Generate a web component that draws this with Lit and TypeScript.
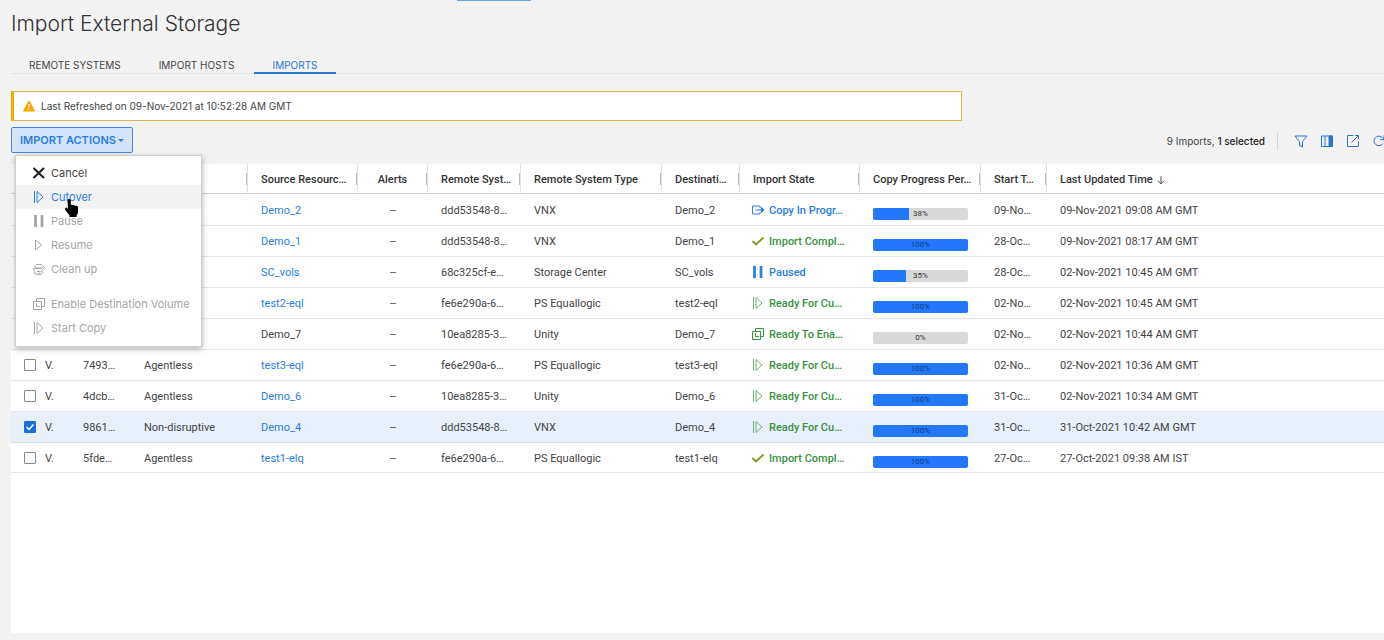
import { LitElement, html, svg, css, nothing } from "lit";
import { customElement, state } from "lit/decorators.js";
import { classMap } from "lit/directives/class-map.js";

type StateKind = "copy" | "done" | "paused" | "ready" | "enable";

interface ImportRow {
  kind: string;
  id: string;
  type: string;
  source: string;
  linked: boolean;
  system: string;
  systemType: string;
  dest: string;
  state: StateKind;
  label: string;
  progress: number;
  start: string;
  updated: string;
}

const row = (
  id: string, type: string, source: string, system: string, systemType: string,
  state: StateKind, label: string, progress: number, start: string, updated: string,
  linked = true,
): ImportRow => ({
  kind: id ? "V." : "", id, type, source, linked, system, systemType,
  dest: source, state, label, progress, start, updated,
});

const ROWS: ImportRow[] = [
  row("", "", "Demo_2", "ddd53548-8…", "VNX", "copy", "Copy In Progr…", 38, "09-No…", "09-Nov-2021 09:08 AM GMT"),
  row("", "", "Demo_1", "ddd53548-8…", "VNX", "done", "Import Compl…", 100, "28-Oc…", "09-Nov-2021 08:17 AM GMT"),
  row("", "", "SC_vols", "68c325cf-e…", "Storage Center", "paused", "Paused", 35, "28-Oc…", "02-Nov-2021 10:45 AM GMT"),
  row("", "", "test2-eql", "fe6e290a-6…", "PS Equallogic", "ready", "Ready For Cu…", 100, "02-No…", "02-Nov-2021 10:45 AM GMT"),
  row("", "", "Demo_7", "10ea8285-3…", "Unity", "enable", "Ready To Ena…", 0, "02-No…", "02-Nov-2021 10:44 AM GMT", false),
  row("7493…", "Agentless", "test3-eql", "fe6e290a-6…", "PS Equallogic", "ready", "Ready For Cu…", 100, "02-No…", "02-Nov-2021 10:36 AM GMT"),
  row("4dcb…", "Agentless", "Demo_6", "10ea8285-3…", "Unity", "ready", "Ready For Cu…", 100, "31-Oc…", "02-Nov-2021 10:34 AM GMT"),
  row("9861…", "Non-disruptive", "Demo_4", "ddd53548-8…", "VNX", "ready", "Ready For Cu…", 100, "31-Oc…", "31-Oct-2021 10:42 AM GMT"),
  row("5fde…", "Agentless", "test1-elq", "fe6e290a-6…", "PS Equallogic", "done", "Import Compl…", 100, "27-Oc…", "27-Oct-2021 09:38 AM IST"),
];

const HEADERS: [string, string][] = [
  ["c-check", ""], ["c-kind", ""], ["c-id", ""], ["c-type", ""],
  ["c-source", "Source Resourc…"], ["c-alerts", "Alerts"], ["c-system", "Remote Syst…"],
  ["c-systype", "Remote System Type"], ["c-dest", "Destinati…"], ["c-state", "Import State"],
  ["c-progress", "Copy Progress Per…"], ["c-start", "Start T…"], ["c-updated", "Last Updated Time"],
];

const SHAPES = {
  cancel: svg`<path d="M1.500 2l10.500 10M12 2L1.500 12" stroke-width="2.2"/>`,
  step: svg`<path d="M2.500 1v12M5 1.500v11l6-5.500z"/>`,
  pause: svg`<path d="M3.500 1v12M10 1v12" stroke-width="2.8"/>`,
  resume: svg`<path d="M3.500 2v10l6-5z"/>`,
  clean: svg`<path d="M1.500 6.500L3 12l5 .5M2.500 4.500l2-2h5l2 2-2 1.500h-5zM1.500 6.500h8M5 9.500h3M13 5L9.500 9M6.500 12l3-3 1.500 1.500-2 2z"/>`,
  enable: svg`<path d="M1.500 4.500h8v8h-8zM4.500 4.500v-3h8v8h-3M4.500 6v3.500H8"/>`,
  copy: svg`<path d="M9 5V3H1.500v8H9V9M4.500 7h6"/><path d="M10.500 4.500L13 7l-2.500 2.500z" fill="currentColor"/>`,
  done: svg`<path d="M1.500 7l3.500 3.500L12.500 3.500" stroke-width="1.800"/>`,
  filter: svg`<path d="M1 2h12L8.500 7.500V13l-3-1.500v-4z"/>`,
  columns: svg`<path d="M1.500 2h11v10.500h-11zM5 2v10.500"/><path d="M9 2h3.500v10.500H9z" fill="currentColor"/>`,
  open: svg`<path d="M7.500 1.500h-6v11h11V7.500M5.500 8.500l7-7M9 1.500h3.500V5"/>`,
  refresh: svg`<path d="M10.500 10A4.800 4.800 0 1 1 10.500 3.800L12 5.500M12 1.500v4.200H8"/>`,
  sort: svg`<path d="M7 2.500v9M3.500 8L7 11.500 10.500 8"/>`,
};

const icon = (name: keyof typeof SHAPES) => html`
  <svg class="icon" viewBox="0 0 14 14" aria-hidden="true">${SHAPES[name]}</svg>`;

const MENU: [keyof typeof SHAPES, string, string][] = [
  ["cancel", "Cancel", "strong"],
  ["step", "Cutover", "active"],
  ["pause", "Pause", "off"],
  ["resume", "Resume", "off"],
  ["clean", "Clean up", "off"],
  ["enable", "Enable Destination Volume", "off split"],
  ["step", "Start Copy", "off"],
];

@customElement("app-root")
export class AppRoot extends LitElement {
  @state() private selected = 7;

  static styles = css`
    :host {
      display: flex;
      flex-direction: column;
      min-height: 100vh;
      box-sizing: border-box;
      padding: 0 0 7px 11px;
      overflow: hidden;
      background: #f3f3f3;
      color: #444;
      font: 11px/16px Inter, sans-serif;
      position: relative;
    }
    * { box-sizing: border-box; }
    button { font: inherit; color: inherit; background: none; border: 0; padding: 0; }
    a { color: #2a7de1; text-decoration: none; }
    .icon {
      display: block;
      flex: none;
      width: 14px;
      height: 14px;
      fill: none;
      stroke: currentColor;
      stroke-width: 1;
    }
    .top-mark {
      position: absolute;
      top: 0;
      left: 457px;
      width: 74px;
      height: 1px;
      background: #6fa5ec;
    }
    h1 {
      margin: 8px 0 0;
      font-size: 21px;
      line-height: 32px;
      font-weight: 300;
      color: #333;
    }
    .tabs {
      display: flex;
      gap: 2px;
      height: 18px;
      margin-top: 16px;
      border-bottom: 1px solid #e4e4e4;
    }
    .tab {
      height: 18px;
      padding: 2px 18px 0;
      font-size: 10px;
      line-height: 14px;
      border-bottom: 2px solid transparent;
    }
    .tab.on { color: #2a74d6; border-color: #2a74d6; }
    .notice {
      display: flex;
      align-items: center;
      gap: 6px;
      max-width: 951px;
      height: 30px;
      margin-top: 17px;
      padding-left: 9px;
      font-size: 10px;
      background: #fff;
      border: 1px solid #dcb64e;
      border-left: 3px solid #f5a800;
    }
    .warn { width: 12px; height: 12px; }
    .bar { display: flex; align-items: flex-start; height: 43px; padding-top: 6px; justify-content: space-between; }
    .actions { position: relative; }
    .trigger {
      display: flex;
      align-items: center;
      gap: 2px;
      height: 26px;
      padding: 0 8px;
      color: #2a7de1;
      font-weight: 600;
      background: #d4e4f8;
      border: 1px solid #4a86d8;
      border-radius: 2px;
    }
    .caret { border: 3px solid transparent; border-top-color: currentColor; border-bottom: 0; }
    .menu {
      position: absolute;
      z-index: 2;
      top: 28px;
      left: 4px;
      width: 187px;
      padding: 5px 0 6px;
      background: #fff;
      border: 1px solid #ccc;
      box-shadow: 0 2px 6px rgba(0, 0, 0, 0.3);
    }
    .item {
      display: flex;
      align-items: center;
      gap: 5px;
      width: 100%;
      height: 24px;
      padding-left: 16px;
      text-align: left;
      white-space: nowrap;
    }
    .item.strong .icon { color: #222; }
    .item.active { color: #2a7de1; background: #f3f3f3; }
    .item.off { color: #a6a6a6; }
    .item.split { margin-top: 11px; }
    .hand { position: absolute; left: 48px; top: 42px; width: 16px; height: 20px; }
    .tools { display: flex; align-items: center; gap: 12px; height: 28px; margin-right: -2px; }
    .tools button { color: #2a74d6; }
    .count { font-size: 10px; white-space: nowrap; }
    .count b { font-weight: 500; color: #222; }
    .rule { width: 1px; height: 18px; margin-right: 4px; background: #d6d6d6; }
    .panel { flex: 1; background: #fff; overflow: hidden; }
    table {
      width: 100%;
      table-layout: fixed;
      border-collapse: separate;
      border-spacing: 0;
      font: 11px/16px Roboto, sans-serif;
    }
    th, td { padding: 2px 0 0 13px; height: 31px; text-align: left; white-space: nowrap; overflow: hidden; }
    th {
      height: 30px;
      font-weight: 500;
      color: #333;
      border-bottom: 1px solid #d0d0d0;
    }
    th.edge {
      border-right: 1px solid #e0e0e0;
      background: linear-gradient(#bbb, #bbb) no-repeat right center / 1px 12px;
    }
    td { border-bottom: 1px solid #e6e6e6; }
    td.c-check { padding-top: 0; }
    tbody tr:first-child td { height: 32px; }
    tbody tr:last-child td { height: 30px; }
    tr.sel td { background: #e8f1fb; border-color: #d3dfed; }
    .c-check { width: 34px; }
    .c-kind { width: 25px; padding-left: 0; }
    .c-id { width: 61px; }
    .c-type { width: 117px; }
    .c-source { width: 110px; }
    .c-alerts { width: 70px; padding-left: 0; text-align: center; }
    .c-system { width: 93px; }
    .c-systype { width: 141px; }
    .c-dest { width: 78px; }
    .c-state { width: 120px; }
    .c-progress { width: 121px; }
    .c-start { width: 66px; }
    .head { display: flex; align-items: center; gap: 2px; }
    .head .icon { width: 12px; height: 12px; }
    input {
      display: block;
      appearance: none;
      width: 12px;
      height: 12px;
      margin: 0;
      border: 1px solid #888;
      border-radius: 1px;
      background: #fff;
    }
    input:checked {
      border-color: #1b6fd8;
      background: #1b6fd8 url("data:image/svg+xml,%3Csvg xmlns='http://www.w3.org/2000/svg' viewBox='0 0 10 10'%3E%3Cpath d='M1.500 5l2.500 2.500 4.500-5' fill='none' stroke='white' stroke-width='1.500'/%3E%3C/svg%3E");
    }
    .status { display: flex; align-items: center; gap: 4px; font-weight: 500; margin-left: -2px; }
    .status .icon { margin-bottom: 2px; }
    .status.blue { color: #2a7de1; }
    .status.green { color: #369240; }
    .status.done .icon { color: #7d9a1c; }
    .status.ready .icon { color: #6fae78; }
    .meter {
      display: grid;
      width: 95px;
      height: 12px;
      margin-top: 6px;
      border-radius: 2px;
      background: #d9d9d9;
      overflow: hidden;
    }
    .fill, .pct { grid-area: 1 / 1; }
    .fill { background: #2277fb; }
    .pct { text-align: center; font-size: 8px; line-height: 12px; color: #333; }
    .pct.full { color: #123a80; }
  `;

  private statusCell(r: ImportRow) {
    const shape = ({ copy: "copy", done: "done", paused: "pause", ready: "step", enable: "enable" } as const)[r.state];
    const blue = r.state === "copy" || r.state === "paused";
    return html`<div class=${classMap({ status: true, blue, green: !blue, [r.state]: true })}>
      ${icon(shape)}<span>${r.label}</span></div>`;
  }

  private renderRow(r: ImportRow, i: number) {
    return html`<tr class=${i === this.selected ? "sel" : ""}>
      <td class="c-check"><input type="checkbox" aria-label="Select ${r.source}"
        .checked=${i === this.selected} @change=${() => (this.selected = i)}></td>
      <td class="c-kind">${r.kind}</td>
      <td>${r.id}</td>
      <td>${r.type}</td>
      <td>${r.linked ? html`<a href="#">${r.source}</a>` : r.source}</td>
      <td class="c-alerts">--</td>
      <td>${r.system}</td>
      <td>${r.systemType}</td>
      <td>${r.dest}</td>
      <td>${this.statusCell(r)}</td>
      <td><div class="meter">
        <div class="fill" style="width:${r.progress}%"></div>
        <span class=${classMap({ pct: true, full: r.progress === 100 })}>${r.progress}%</span>
      </div></td>
      <td>${r.start}</td>
      <td>${r.updated}</td>
    </tr>`;
  }

  render() {
    return html`
      <div class="top-mark"></div>
      <h1>Import External Storage</h1>
      <nav class="tabs" role="tablist">
        <button class="tab" role="tab">REMOTE SYSTEMS</button>
        <button class="tab" role="tab">IMPORT HOSTS</button>
        <button class="tab on" role="tab" aria-selected="true">IMPORTS</button>
      </nav>
      <div class="notice" role="status">
        <svg class="warn" viewBox="0 0 12 12" aria-hidden="true">
          <path d="M6 .8L11.500 11H.5z" fill="#f5a800" stroke="#f5a800" stroke-linejoin="round"/>
          <path d="M6 4v3.500M6 8.500v1.300" stroke="#fff" stroke-width="1.200"/>
        </svg>
        <span>Last Refreshed on 09-Nov-2021 at 10:52:28 AM GMT</span>
      </div>
      <div class="bar">
        <div class="actions">
          <button class="trigger" aria-haspopup="menu" aria-expanded="true">IMPORT ACTIONS<span class="caret"></span></button>
          <div class="menu" role="menu">
            ${MENU.map(([shape, label, cls]) => html`
              <button class="item ${cls}" role="menuitem" ?disabled=${cls.startsWith("off")}>${icon(shape)}<span>${label}</span></button>`)}
            <svg class="hand" viewBox="0 0 16 20" aria-hidden="true">
              <path d="M3.500 2Q5 0 6.800 2V7q1.200-.8 2.200.3 1.300-.8 2.200.6 1.800-.6 2.800.8V14q-.3 2-1.500 3.500V19H5.500v-1.500L1.200 12Q.5 9.200 2.500 9.500L4 11z" fill="#000"/>
            </svg>
          </div>
        </div>
        <div class="tools">
          <span class="count">9 Imports, <b>1 selected</b></span>
          <span class="rule"></span>
          <button aria-label="Filter">${icon("filter")}</button>
          <button aria-label="Columns">${icon("columns")}</button>
          <button aria-label="Export">${icon("open")}</button>
          <button aria-label="Refresh">${icon("refresh")}</button>
        </div>
      </div>
      <div class="panel">
        <table>
          <thead><tr>
            ${HEADERS.map(([cls, label], i) => html`
              <th class=${classMap({ [cls]: true, edge: i > 2 && i < 12 })}>
                ${i === 12 ? html`<span class="head">${label}${icon("sort")}</span>` : label || nothing}
              </th>`)}
          </tr></thead>
          <tbody>${ROWS.map((r, i) => this.renderRow(r, i))}</tbody>
        </table>
      </div>`;
  }
}
